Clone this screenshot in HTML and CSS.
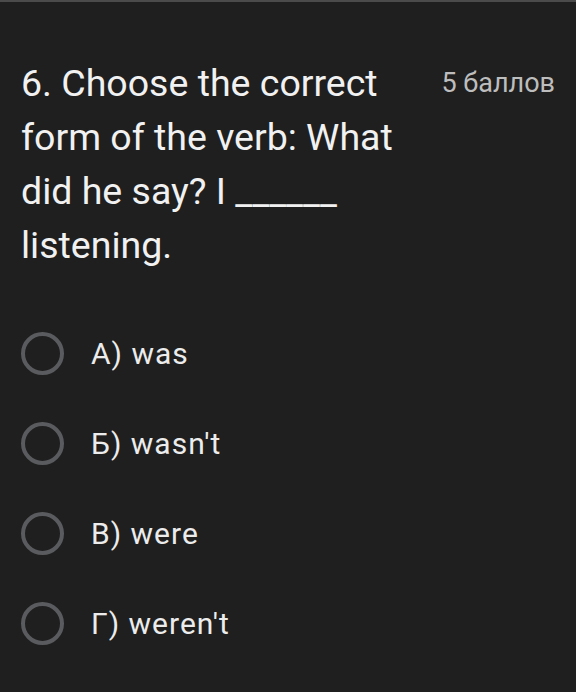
FILE: index.html
```html
<!DOCTYPE html>
<html>
<head>
<meta charset="utf-8">
<link rel="stylesheet" href="styles.css">
</head>
<body>
<div class="topbar"></div>
<div class="card">
  <div class="header">
    <div class="title">6. Choose the correct form of the verb: What did he say? I ______ listening.</div>
    <div class="points">5 баллов</div>
  </div>
  <div class="options">
    <div class="option"><span class="radio"></span><span class="label">А) was</span></div>
    <div class="option"><span class="radio"></span><span class="label">Б) wasn't</span></div>
    <div class="option"><span class="radio"></span><span class="label">В) were</span></div>
    <div class="option"><span class="radio"></span><span class="label">Г) weren't</span></div>
  </div>
</div>
</body>
</html>
```
FILE: styles.css
```css
html, body {
  margin: 0;
  padding: 0;
  background: #1f1f1f;
}
body {
  width: 576px;
  height: 692px;
  overflow: hidden;
  font-family: Roboto, "Open Sans", sans-serif;
}
.topbar {
  height: 2px;
  background: #4b4b4b;
}
.card {
  padding: 54px 21px 0 21px;
}
.header {
  display: flex;
  justify-content: space-between;
  align-items: flex-start;
}
.title {
  width: 408px;
  font-size: 37.5px;
  line-height: 54px;
  color: #f1f1f1;
}
.points {
  font-size: 27px;
  line-height: 54px;
  color: #bdbdbd;
}
.options {
  margin-top: 59px;
  display: flex;
  flex-direction: column;
  gap: 46px;
}
.option {
  display: flex;
  align-items: center;
  height: 44px;
}
.radio {
  width: 35px;
  height: 35px;
  border: 4.5px solid #5a5b5e;
  border-radius: 50%;
  flex: none;
}
.label {
  margin-left: 27px;
  font-size: 30px;
  letter-spacing: 1px;
  color: #ececec;
}
```
